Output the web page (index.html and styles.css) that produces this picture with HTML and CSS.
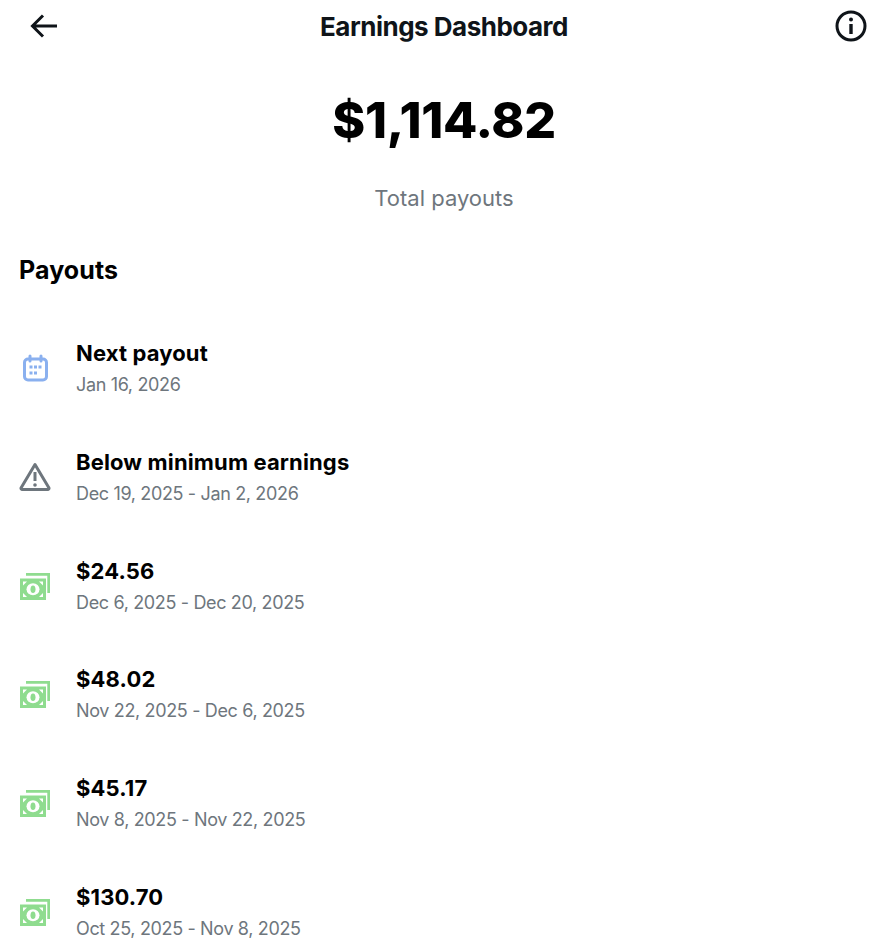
FILE: index.html
```html
<!DOCTYPE html>
<html lang="en">
<head>
    <meta charset="UTF-8">
    <meta name="viewport" content="width=device-width, initial-scale=1.0">
    <title>Earnings Dashboard</title>
    <link rel="stylesheet" href="styles.css">
</head>
<body>
    <header class="top-bar">
        <svg class="back-icon" viewBox="0 0 28 28" fill="none" stroke="#0f1419" stroke-width="3">
            <path d="M27 14H3M13 3.500L2.500 14L13 24.500"/>
        </svg>
        <h1 class="title">Earnings Dashboard</h1>
        <svg class="info-icon" viewBox="0 0 32 32" fill="none" stroke="#0f1419" stroke-width="3">
            <circle cx="16" cy="16" r="14"/>
            <path d="M16 14v10" stroke-width="3.4"/>
            <circle cx="16" cy="9.500" r="2" fill="#0f1419" stroke="none"/>
        </svg>
    </header>

    <section class="total">
        <div class="total-amount">$1,114.82</div>
        <div class="total-label">Total payouts</div>
    </section>

    <h2 class="section-title">Payouts</h2>

    <ul class="payouts">
        <li class="payout">
            <svg class="payout-icon" viewBox="0 0 32 32" fill="none" stroke="#8ab0ef" stroke-width="3">
                <rect x="5.500" y="7" width="22" height="21" rx="3.500"/>
                <path d="M11 4v5M22 4v5" stroke-linecap="round"/>
                <path d="M10.500 15h3M15 15h3M19.500 15h3M10.500 21h3M15 21h3" stroke-width="3"/>
            </svg>
            <div>
                <div class="payout-title">Next payout</div>
                <div class="payout-date">Jan 16, 2026</div>
            </div>
        </li>
        <li class="payout">
            <svg class="payout-icon" viewBox="0 0 32 32" fill="none" stroke="#6e767d" stroke-width="3">
                <path d="M16 3.500L30 27a1.200 1.200 0 0 1-1 1.500H3A1.200 1.200 0 0 1 2 27Z" stroke-linejoin="round"/>
                <path d="M16 11v9"/>
                <circle cx="16" cy="24" r="1.800" fill="#6e767d" stroke="none"/>
            </svg>
            <div>
                <div class="payout-title">Below minimum earnings</div>
                <div class="payout-date">Dec 19, 2025 - Jan 2, 2026</div>
            </div>
        </li>
        <li class="payout">
            <svg class="payout-icon" viewBox="0 0 32 32"><use href="#money"/></svg>
            <div>
                <div class="payout-title">$24.56</div>
                <div class="payout-date">Dec 6, 2025 - Dec 20, 2025</div>
            </div>
        </li>
        <li class="payout">
            <svg class="payout-icon" viewBox="0 0 32 32"><use href="#money"/></svg>
            <div>
                <div class="payout-title">$48.02</div>
                <div class="payout-date">Nov 22, 2025 - Dec 6, 2025</div>
            </div>
        </li>
        <li class="payout">
            <svg class="payout-icon" viewBox="0 0 32 32"><use href="#money"/></svg>
            <div>
                <div class="payout-title">$45.17</div>
                <div class="payout-date">Nov 8, 2025 - Nov 22, 2025</div>
            </div>
        </li>
        <li class="payout">
            <svg class="payout-icon" viewBox="0 0 32 32"><use href="#money"/></svg>
            <div>
                <div class="payout-title">$130.70</div>
                <div class="payout-date">Oct 25, 2025 - Nov 8, 2025</div>
            </div>
        </li>
    </ul>

    <svg class="defs" width="0" height="0">
        <symbol id="money" viewBox="0 0 32 32">
            <path d="M7 3h24v20h-2.700V5.700H7Z" fill="#8fdc8f"/>
            <path d="M1 8.500h26V30H1Z" fill="#8fdc8f"/>
            <path d="M4 11.500h4l-4 4ZM24 11.500v4l-4-4ZM4 27v-4l4 4ZM24 27h-4l4-4Z" fill="#fff"/>
            <ellipse cx="14" cy="19.200" rx="6.500" ry="6" fill="#fff"/>
            <ellipse cx="14" cy="19.200" rx="2.500" ry="3.800" fill="#8fdc8f"/>
        </symbol>
    </svg>
</body>
</html>
```

FILE: styles.css
```css
body {
    font-family: Inter, "Liberation Sans", Arial, sans-serif;
    margin: 0;
    height: 946px;
    overflow: hidden;
    background-color: #fff;
    color: #0f1419;
}

.top-bar {
    display: grid;
    grid-template-columns: 1fr auto 1fr;
    align-items: center;
    height: 52px;
    padding: 0 21px 0 30px;
}

.back-icon {
    width: 28px;
    height: 28px;
}

.info-icon {
    width: 32px;
    height: 32px;
    justify-self: end;
}

.title {
    margin: 0 0 0 -9px;
    font-size: 26px;
    font-weight: 700;
    letter-spacing: -0.5px;
}

.total {
    text-align: center;
    margin-top: 25px;
}

.total-amount {
    font-size: 50px;
    line-height: 86px;
    font-weight: 800;
    letter-spacing: -0.3px;
    color: #000;
}

.total-label {
    margin-top: 21px;
    font-size: 22px;
    line-height: 28px;
    color: #6e767d;
}

.section-title {
    margin: 43px 0 0 19px;
    font-size: 25px;
    line-height: 30px;
    font-weight: 700;
    letter-spacing: 0.1px;
    color: #000;
}

.payouts {
    list-style: none;
    margin: 29px 0 0;
    padding: 0 0 0 19px;
}

.payout {
    display: flex;
    align-items: center;
    gap: 25px;
    height: 108.7px;
}

.payout-icon {
    width: 32px;
    height: 32px;
    flex-shrink: 0;
}

.payout-title {
    font-size: 22px;
    line-height: 28px;
    font-weight: 700;
    letter-spacing: 0.14px;
    color: #000;
}

.payout-date {
    margin-top: 6px;
    font-size: 18px;
    line-height: 24px;
    letter-spacing: -0.35px;
    color: #6e767d;
}

.defs {
    position: absolute;
}
```
